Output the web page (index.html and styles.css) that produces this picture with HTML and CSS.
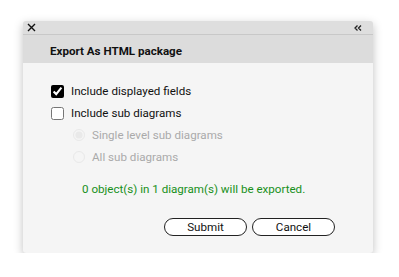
FILE: index.html
```html
<!DOCTYPE html>
<html lang="en">

<head>
    <meta charset="UTF-8">
    <title>Export As HTML package</title>
    <link rel="stylesheet" href="styles.css">
</head>

<body>
    <div class="dialog">
        <div class="titlebar">
            <svg class="close" width="9" height="9" viewBox="0 0 9 9">
                <path d="M1 1L8 8M8 1L1 8" stroke="#111" stroke-width="1.4" fill="none"/>
            </svg>
            <svg class="collapse" width="8" height="6" viewBox="0 0 8 6">
                <path d="M3.5 0.5L1 3L3.5 5.5M7 0.5L4.5 3L7 5.5" stroke="#222" stroke-width="1.3" fill="none"/>
            </svg>
        </div>
        <div class="header">Export As HTML package</div>
        <div class="content">
            <label class="row">
                <input type="checkbox" class="check" checked>
                <span>Include displayed fields</span>
            </label>
            <label class="row">
                <input type="checkbox" class="check">
                <span>Include sub diagrams</span>
            </label>
            <label class="row sub disabled">
                <input type="radio" name="level" class="radio" checked disabled>
                <span>Single level sub diagrams</span>
            </label>
            <label class="row sub disabled">
                <input type="radio" name="level" class="radio" disabled>
                <span>All sub diagrams</span>
            </label>
            <p class="info">0 object(s) in 1 diagram(s) will be exported.</p>
            <div class="buttons">
                <button class="btn">Submit</button>
                <button class="btn">Cancel</button>
            </div>
        </div>
    </div>
</body>

</html>
```

FILE: styles.css
```css
body {
    margin: 0;
    background: #fff;
    font-family: Roboto, "Liberation Sans", sans-serif;
}

.dialog {
    width: 350px;
    margin: 21px 0 0 23px;
    border-radius: 3px;
    background: #f5f5f5;
    box-shadow: 0 3px 10px rgba(0, 0, 0, .25);
    overflow: hidden;
}

.titlebar {
    display: flex;
    justify-content: space-between;
    align-items: center;
    height: 13px;
    padding: 0 11px 0 4px;
    background: #dedede;
    border-bottom: 1px solid #c8c8c8;
}

.close {
    display: block;
}

.collapse {
    display: block;
}

.header {
    height: 28px;
    line-height: 33px;
    padding-left: 27px;
    background: #dcdcdc;
    font-size: 11.6px;
    font-weight: bold;
    color: #111;
}

.content {
    padding: 17px 0 17px 28px;
    font-size: 11.6px;
    color: #111;
}

.row {
    display: flex;
    align-items: center;
    height: 22px;
}

.check {
    width: 13px;
    height: 13px;
    margin: 0 7px 0 0;
    accent-color: #000;
}

.sub {
    padding-left: 22px;
}

.radio {
    width: 12px;
    height: 12px;
    margin: 0 7px 0 0;
    opacity: .3;
}

.disabled {
    color: #aaa;
}

.info {
    margin: 14px 0 0 31px;
    color: #17901a;
}

.buttons {
    display: flex;
    justify-content: flex-end;
    gap: 5px;
    margin: 22px 38px 0 0;
}

.btn {
    width: 83px;
    height: 18px;
    padding: 0;
    border: 1px solid #222;
    border-radius: 9px;
    background: #fff;
    font: 11.6px Roboto, "Liberation Sans", sans-serif;
    color: #111;
}
```
